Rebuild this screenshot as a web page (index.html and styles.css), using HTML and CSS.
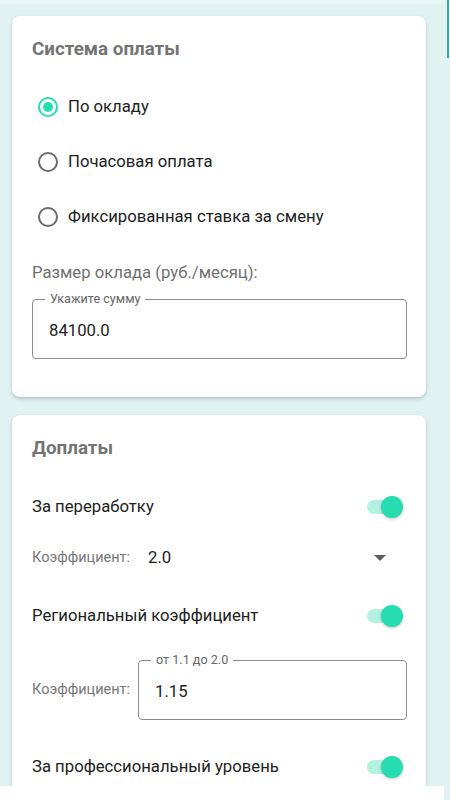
FILE: index.html
```html
<!DOCTYPE html>
<html lang="ru">
<head>
<meta charset="utf-8">
<title>Система оплаты</title>
<link rel="stylesheet" href="styles.css">
</head>
<body>
<div class="page">
  <section class="card card-pay">
    <h2 class="card-title">Система оплаты</h2>
    <div class="radio-group">
      <div class="radio-row"><span class="radio checked"></span><span class="radio-text">По окладу</span></div>
      <div class="radio-row"><span class="radio"></span><span class="radio-text">Почасовая оплата</span></div>
      <div class="radio-row"><span class="radio"></span><span class="radio-text">Фиксированная ставка за смену</span></div>
    </div>
    <div class="field-caption">Размер оклада (руб./месяц):</div>
    <div class="outlined salary">
      <span class="outlined-label">Укажите сумму</span>
      <span class="outlined-value">84100.0</span>
    </div>
  </section>

  <section class="card card-extra">
    <h2 class="card-title">Доплаты</h2>
    <div class="switch-row row-overtime">
      <span class="switch-text">За переработку</span>
      <span class="switch on"><span class="track"></span><span class="thumb"></span></span>
    </div>
    <div class="coef-row row-select">
      <span class="coef-label">Коэффициент:</span>
      <span class="select-value">2.0</span>
      <svg class="caret" width="12" height="6" viewBox="0 0 12 6"><path d="M0 0 L12 0 L6 6 Z" fill="#5f5f5f"/></svg>
    </div>
    <div class="switch-row row-region">
      <span class="switch-text">Региональный коэффициент</span>
      <span class="switch on"><span class="track"></span><span class="thumb"></span></span>
    </div>
    <div class="coef-row row-field">
      <span class="coef-label">Коэффициент:</span>
      <div class="outlined coef-field">
        <span class="outlined-label">от 1.1 до 2.0</span>
        <span class="outlined-value">1.15</span>
      </div>
    </div>
    <div class="switch-row row-prof">
      <span class="switch-text">За профессиональный уровень</span>
      <span class="switch on"><span class="track"></span><span class="thumb"></span></span>
    </div>
  </section>
</div>
<div class="top-strip"></div>
<div class="scroll-indicator"></div>
<div class="bottom-bar"></div>
</body>
</html>
```

FILE: styles.css
```css
* { box-sizing: border-box; }
html, body {
  margin: 0;
  padding: 0;
  background: #e0f2f2;
  font-family: Roboto, "Noto Sans", "Liberation Sans", sans-serif;
  color: #212121;
}
.page {
  padding: 16px 24px 20px 12px;
  display: flex;
  flex-direction: column;
  gap: 18px;
}
.card {
  background: #ffffff;
  border-radius: 8px;
  box-shadow: 0 2px 4px rgba(0, 0, 0, 0.16), 0 1px 2px rgba(0, 0, 0, 0.06);
  padding: 21px 19px 38px 20px;
}
.card-title {
  margin: 0;
  font-size: 18.8px;
  line-height: 24px;
  font-weight: 700;
  color: #737373;
}
.radio-group {
  margin-top: 18px;
  display: flex;
  flex-direction: column;
}
.radio-row {
  height: 55px;
  display: flex;
  align-items: center;
  padding-left: 6px;
  gap: 10px;
}
.radio {
  width: 20px;
  height: 20px;
  border-radius: 50%;
  border: 2px solid #6b6b6b;
  display: flex;
  align-items: center;
  justify-content: center;
  flex: none;
}
.radio.checked { border-color: #26dcb0; }
.radio.checked::after {
  content: "";
  width: 10px;
  height: 10px;
  border-radius: 50%;
  background: #26dcb0;
}
.radio-text {
  font-size: 16.7px;
  line-height: 24px;
  color: #212121;
}
.field-caption {
  margin-top: 17px;
  font-size: 16.7px;
  line-height: 24px;
  color: #707070;
}
.outlined {
  position: relative;
  height: 60px;
  border: 1px solid #8c8c8c;
  border-radius: 4px;
  display: flex;
  align-items: center;
  padding: 4px 15px 0 16px;
}
.salary { margin-top: 14px; }
.outlined-label {
  position: absolute;
  top: -8px;
  left: 12px;
  padding: 0 5px;
  background: #ffffff;
  font-size: 12.6px;
  line-height: 14px;
  color: #666666;
}
.outlined-value {
  font-size: 16.7px;
  line-height: 24px;
  color: #212121;
}
.card-extra { padding-bottom: 30px; }
.switch-row {
  height: 40px;
  display: flex;
  align-items: center;
  justify-content: space-between;
  padding-right: 2px;
}
.switch-text {
  font-size: 16.7px;
  line-height: 24px;
  color: #212121;
}
.row-overtime { margin-top: 27px; }
.row-region { margin-top: 18px; }
.row-prof { margin-top: 27px; }
.switch {
  position: relative;
  width: 38px;
  height: 24px;
  flex: none;
}
.switch .track {
  position: absolute;
  left: 0;
  top: 5px;
  width: 34px;
  height: 14px;
  border-radius: 7px;
  background: #b3f1e0;
}
.switch .thumb {
  position: absolute;
  right: 2px;
  top: 1px;
  width: 22px;
  height: 22px;
  border-radius: 50%;
  background: #26dcb0;
  box-shadow: 0 1px 3px rgba(0, 0, 0, 0.25);
}
.coef-row {
  display: flex;
  align-items: center;
}
.row-select {
  margin-top: 11px;
  height: 40px;
  padding-right: 21px;
}
.coef-label {
  font-size: 14.5px;
  line-height: 20px;
  color: #777777;
  width: 106px;
  flex: none;
}
.select-value {
  margin-left: 10px;
  font-size: 16.7px;
  line-height: 24px;
  color: #212121;
  flex: 1;
}
.caret { flex: none; }
.row-field { margin-top: 24px; }
.coef-field { flex: 1; }
.top-strip {
  position: fixed;
  top: 0;
  left: 0;
  width: 444px;
  height: 4px;
  background: #e8f5f5;
}
.scroll-indicator {
  position: fixed;
  top: 0;
  right: 1px;
  width: 2px;
  height: 58px;
  background: #3aa8a0;
}
.bottom-bar {
  position: fixed;
  left: 0;
  bottom: 0;
  width: 444px;
  height: 14px;
  background: #ffffff;
}
```
